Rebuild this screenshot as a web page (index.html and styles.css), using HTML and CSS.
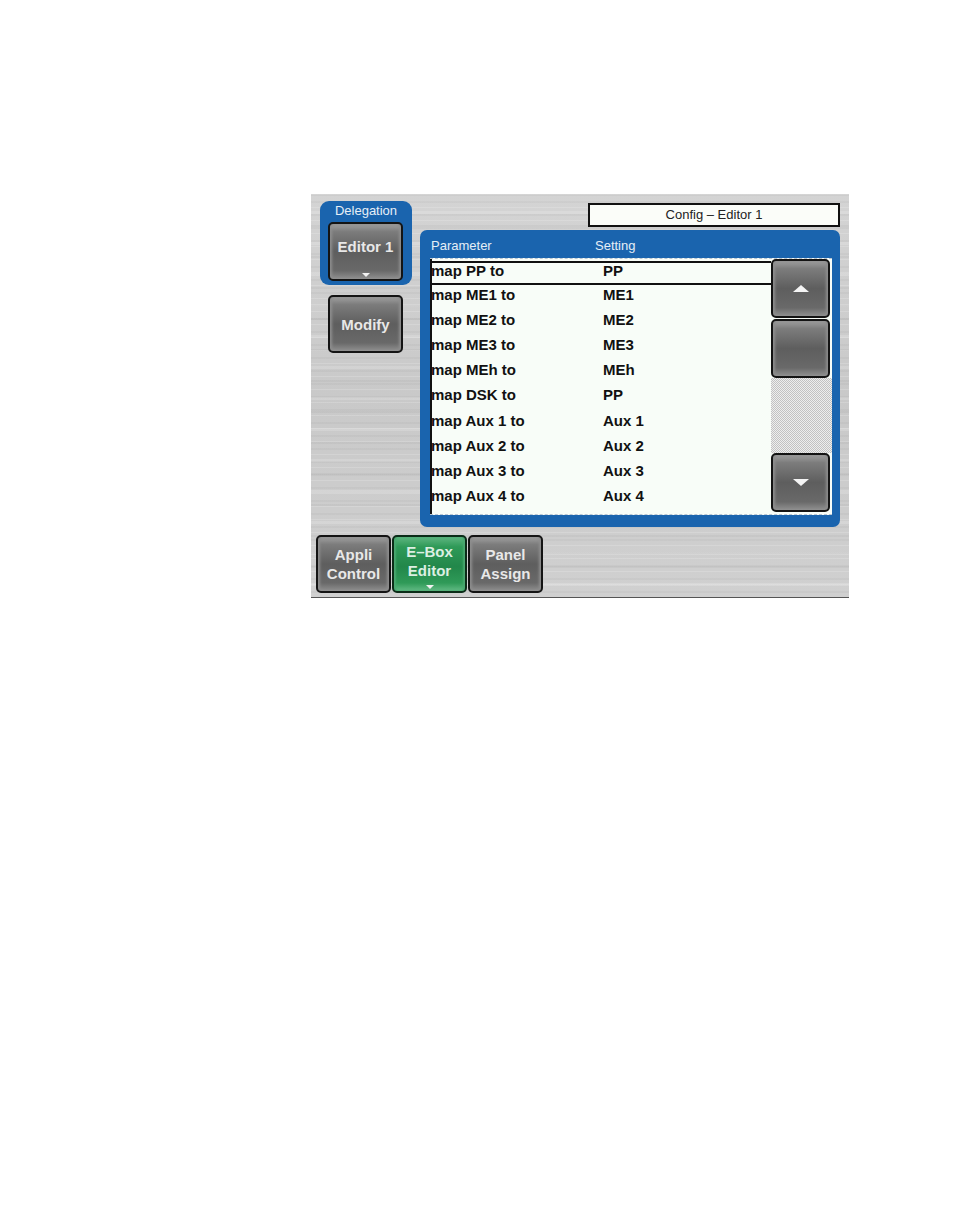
FILE: index.html
```html
<!DOCTYPE html>
<html lang="en">
<head>
  <meta charset="UTF-8" />
  <title>Config - Editor 1</title>
  <link rel="stylesheet" href="styles.css">
</head>
<body>
  <div class="screen">
    <div class="main">
      <!-- Left column -->
      <div class="side">
        <div class="delegation">
          <div class="delegation-label">Delegation</div>
          <div class="btn btn-wide">
            <span>Editor 1</span>
            <i class="menu-mark"></i>
          </div>
        </div>
        <div class="btn btn-wide btn-modify"><span>Modify</span></div>
      </div>

      <!-- Title and parameter list -->
      <div class="content">
        <div class="title">Config &#8211; Editor 1</div>
        <div class="panel">
          <div class="panel-head">
            <span class="col-param">Parameter</span>
            <span>Setting</span>
          </div>
          <div class="list">
            <div class="rows">
              <div class="row row-selected"><span class="col-param">map PP to</span><span>PP</span></div>
              <div class="row"><span class="col-param">map ME1 to</span><span>ME1</span></div>
              <div class="row"><span class="col-param">map ME2 to</span><span>ME2</span></div>
              <div class="row"><span class="col-param">map ME3 to</span><span>ME3</span></div>
              <div class="row"><span class="col-param">map MEh to</span><span>MEh</span></div>
              <div class="row"><span class="col-param">map DSK to</span><span>PP</span></div>
              <div class="row"><span class="col-param">map Aux 1 to</span><span>Aux 1</span></div>
              <div class="row"><span class="col-param">map Aux 2 to</span><span>Aux 2</span></div>
              <div class="row"><span class="col-param">map Aux 3 to</span><span>Aux 3</span></div>
              <div class="row"><span class="col-param">map Aux 4 to</span><span>Aux 4</span></div>
            </div>
            <div class="scroll">
              <div class="btn btn-scroll"><i class="arrow-up"></i></div>
              <div class="btn btn-scroll btn-thumb"></div>
              <div class="trough"></div>
              <div class="btn btn-scroll"><i class="arrow-down"></i></div>
            </div>
          </div>
        </div>
      </div>
    </div>

    <!-- Bottom tabs -->
    <div class="tabs">
      <div class="btn btn-tab"><span>Appli<br>Control</span></div>
      <div class="btn btn-tab btn-green"><span>E&#8211;Box<br>Editor</span><i class="menu-mark"></i></div>
      <div class="btn btn-tab"><span>Panel<br>Assign</span></div>
    </div>
  </div>
</body>
</html>
```

FILE: styles.css
```css
body {
  margin: 0;
  background-color: #ffffff;
  font-family: "Liberation Sans", Arial, sans-serif;
  font-weight: bold;
}
/* Brushed metal screen */
.screen {
  box-sizing: border-box;
  width: 538px;
  height: 404px;
  margin: 194px 0 0 311px;
  padding: 7px 0 0 5px;
  border-bottom: 1px solid #555;
  background-color: #cfcfcf;
  background-image:
    repeating-linear-gradient(180deg, rgba(255,255,255,0.16) 0 1px, rgba(255,255,255,0) 1px 7px, rgba(90,90,90,0.05) 7px 9px, rgba(255,255,255,0) 9px 13px),
    repeating-linear-gradient(180deg, rgba(90,90,90,0.06) 0 2px, rgba(255,255,255,0) 2px 17px, rgba(255,255,255,0.16) 17px 20px, rgba(255,255,255,0) 20px 31px),
    linear-gradient(180deg, #d4d4d4, #c9c9c9 50%, #d0d0d0);
}
.main {
  display: flex;
  height: 334px;
}
/* Left column */
.side {
  width: 92px;
  margin-left: 4px;
}
.delegation {
  box-sizing: border-box;
  height: 84px;
  padding: 3px 8px 0;
  border-radius: 9px;
  background-color: #1a64ae;
}
.delegation-label {
  height: 18px;
  color: #e6eef6;
  font-size: 13px;
  font-weight: normal;
  line-height: 14px;
  text-align: center;
}
/* Buttons */
.btn {
  box-sizing: border-box;
  position: relative;
  display: flex;
  align-items: center;
  justify-content: center;
  border: 2px solid #141414;
  border-radius: 5px;
  background: linear-gradient(180deg, #a0a0a0 0, #7c7c7c 14%, #5e5e5e 50%, #696969 85%, #909090 100%);
  box-shadow: inset 2px 0 3px #8e8e8e, inset -2px 0 3px #8e8e8e;
  color: #e8e8e8;
  text-align: center;
}
.btn-wide {
  width: 75px;
  height: 59px;
  font-size: 15px;
}
.btn-wide span {
  margin-bottom: 10px;
}
.btn-modify {
  height: 58px;
  margin: 10px 0 0 8px;
}
.btn-modify span {
  margin-bottom: 0;
}
.menu-mark {
  position: absolute;
  left: 50%;
  bottom: 2px;
  margin-left: -4px;
  border-left: 4px solid transparent;
  border-right: 4px solid transparent;
  border-top: 4px solid #f2f2f2;
}
/* Title and list panel */
.content {
  width: 420px;
  margin-left: 8px;
}
.title {
  box-sizing: border-box;
  width: 252px;
  height: 24px;
  margin: 2px 0 3px 168px;
  border: 2px solid #111;
  background-color: #fbfdf9;
  color: #222;
  font-size: 13px;
  font-weight: normal;
  line-height: 20px;
  text-align: center;
}
.panel {
  box-sizing: border-box;
  height: 297px;
  padding: 0 8px 12px 10px;
  border-radius: 7px;
  background-color: #1a64ae;
}
.panel-head {
  display: flex;
  height: 28px;
  padding-left: 1px;
  color: #e6eef6;
  font-size: 13px;
  font-weight: normal;
  line-height: 31px;
}
.col-param {
  width: 164px;
  flex-shrink: 0;
}
.list {
  display: flex;
  box-sizing: border-box;
  height: 257px;
  border-top: 1px dashed #b9c6d2;
  border-bottom: 1px dashed #b9c6d2;
  background-color: #f8fdf8;
}
.rows {
  box-sizing: border-box;
  width: 341px;
  padding: 2px 0 0 1px;
  box-shadow: inset 2px 0 #111;
}
.row {
  display: flex;
  box-sizing: border-box;
  height: 25.1px;
  color: #111;
  font-size: 15px;
  line-height: 18px;
}
.row .col-param {
  width: 172px;
}
.row-selected {
  height: 24px;
  margin: 0 0 1.1px -1px;
  padding-left: 1px;
  border-top: 2px solid #111;
  border-bottom: 2px solid #111;
  line-height: 15px;
}
/* Scrollbar */
.scroll {
  display: flex;
  flex-direction: column;
  width: 61px;
}
.btn-scroll {
  flex-shrink: 0;
  width: 59px;
  height: 59px;
}
.btn-thumb {
  margin-top: 1px;
}
.trough {
  flex-grow: 1;
  background-color: #dcdcdc;
  background-image: conic-gradient(#c2c2c2 25%, #eeeeee 0 50%, #c2c2c2 0 75%, #eeeeee 0);
  background-size: 2px 2px;
}
.scroll .btn-scroll:last-child {
  margin-bottom: 2px;
}
.arrow-up {
  border-left: 8px solid transparent;
  border-right: 8px solid transparent;
  border-bottom: 7px solid #f4f4f4;
}
.arrow-down {
  border-left: 8px solid transparent;
  border-right: 8px solid transparent;
  border-top: 7px solid #f4f4f4;
}
/* Bottom tabs */
.tabs {
  display: flex;
  gap: 1px;
}
.btn-tab {
  width: 75px;
  height: 58px;
  font-size: 15px;
  line-height: 19px;
}
.btn-green {
  border-color: #0b2c18;
  background: linear-gradient(180deg, #5fb681 0, #2f9a58 18%, #22874a 55%, #2f9a58 85%, #63bb85 100%);
  box-shadow: inset 2px 0 2px #4aa870, inset -2px 0 2px #4aa870;
  color: #dcefe3;
}
.btn-green span {
  margin-bottom: 7px;
}
```
